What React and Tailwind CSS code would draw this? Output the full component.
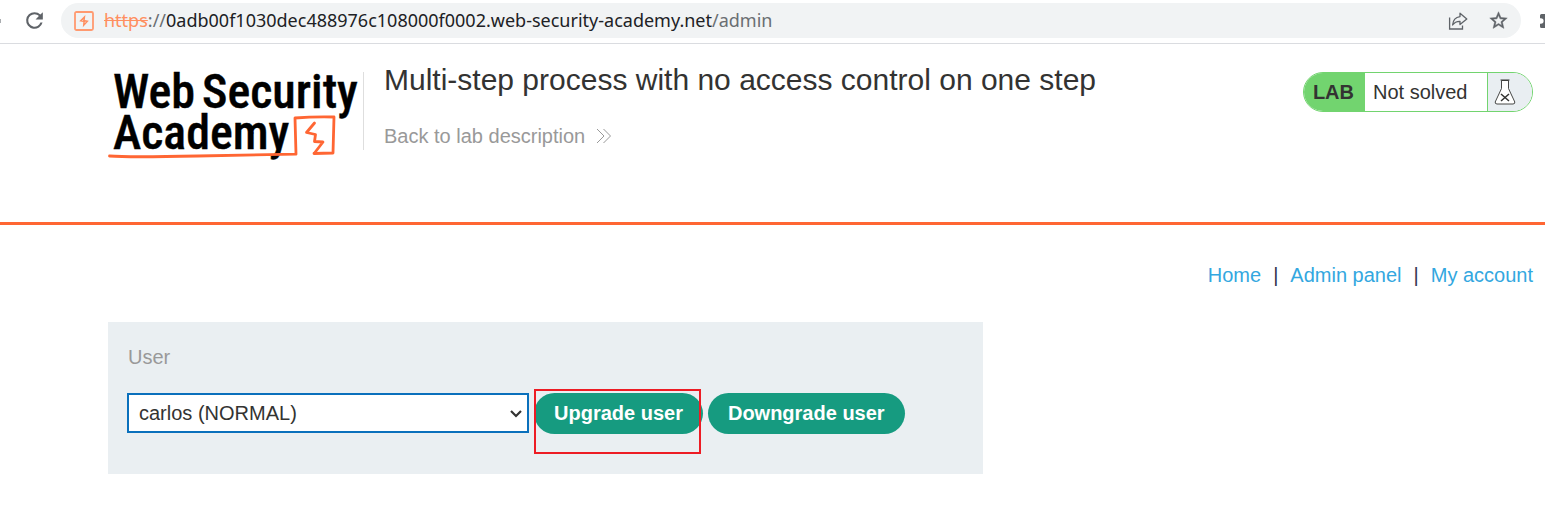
import React from "react";

function BurpIcon() {
  return (
    <svg viewBox="0 0 20 20" className="size-5 shrink-0" fill="none" aria-hidden="true">
      <rect x="1" y="1" width="18" height="18" rx="1.5" stroke="#ff9a70" strokeWidth="1.8" />
      <path d="M11.4 4 L5.2 10.2 L9.3 10.9 L8.8 16.2 L14.8 9.7 L10.8 9 Z" fill="#ff8f60" />
      <path d="M9.3 8.6 L8.2 10 M11.6 10.6 L10.8 12" stroke="#f1f3f4" strokeWidth="0.6" />
    </svg>
  );
}

function BrowserBar() {
  return (
    <div className="flex h-11 items-center overflow-hidden border-b border-[#dadce0] bg-white pb-0.5">
      <div className="flex w-[61px] shrink-0 items-center">
        <span className="h-1 w-px bg-[#aaadb0]" />
        <button type="button" aria-label="Reload" className="ml-[21px] text-[#5f6368]">
          <svg viewBox="0 0 24 24" className="size-[25px]" fill="currentColor">
            <path d="M17.65 6.35A7.96 7.96 0 0 0 12 4a8 8 0 1 0 7.73 10h-2.08A6 6 0 1 1 12 6c1.66 0 3.14.69 4.22 1.78L13 11h7V4z" />
          </svg>
        </button>
      </div>
      <div className="flex h-[35px] grow items-center rounded-full bg-[#f1f3f4] pr-3 pl-[13px]">
        <BurpIcon />
        <div
          role="textbox"
          aria-label="Address"
          className="ml-[10px] grow pb-0.5 font-['Noto_Sans',sans-serif] text-lg leading-6 whitespace-nowrap text-[#202124]"
        >
          <span className="text-[#ff8f60] line-through">https</span>
          <span className="text-[#6a6e72]">://</span>
          0adb00f1030dec488976c108000f0002.web-security-academy.net
          <span className="text-[#6a6e72]">/admin</span>
        </div>
        <div className="flex items-center gap-5 text-[#5f6368]">
          <button type="button" aria-label="Share">
            <svg viewBox="0 0 20 20" className="size-5" fill="none" stroke="currentColor" strokeWidth="1.3">
              <path d="M1.6 6.5 V18 H14.5 V14.6" />
              <path d="M12 2.2 L18.8 8 L12 13.6 V10.3 C8.6 10.2 6.4 11.4 4.6 14 C5 9.4 7.4 6.2 12 5.6 Z" strokeLinejoin="round" />
            </svg>
          </button>
          <button type="button" aria-label="Bookmark">
            <svg viewBox="0 0 24 24" className="size-[21px]" fill="currentColor" stroke="currentColor" strokeWidth="0.5">
              <path d="M22 9.24l-7.19-.62L12 2 9.19 8.63 2 9.24l5.46 4.73L5.82 21 12 17.27 18.18 21l-1.63-7.03L22 9.24zM12 15.4l-3.76 2.27 1-4.28-3.32-2.88 4.38-.38L12 6.1l1.71 4.04 4.38.38-3.32 2.88 1 4.28L12 15.4z" />
            </svg>
          </button>
        </div>
      </div>
      <div className="flex w-6 shrink-0 justify-end overflow-hidden">
        <svg viewBox="0 0 5 14" className="h-[14px] w-[5px]" fill="#5f6368" aria-hidden="true">
          <path d="M1.5 0 H5 V14 H1.5 Q0 14 0 12.5 V9.8 H0.8 A2.8 2.8 0 0 0 0.8 4.2 H0 V1.5 Q0 0 1.5 0 Z" />
        </svg>
      </div>
    </div>
  );
}

function Logo() {
  return (
    <a href="#academy" aria-label="Web Security Academy" className="block shrink-0">
      <svg viewBox="0 0 250 92" className="h-[92px] w-[250px] overflow-visible" fill="none">
        <g fill="#000" stroke="#000" strokeWidth="0.4" fontFamily="'Roboto Condensed', Roboto, sans-serif" fontWeight="500" fontSize="48">
          <text x="5" y="36">Web</text>
          <text x="94" y="36">Security</text>
          <text x="5" y="77">Academy</text>
        </g>
        <g stroke="#ff6633" strokeLinejoin="round" strokeLinecap="round">
          <path d="M1.5 84 Q20 85.5 90 84 T188 82.2 L187 46 Q206 44.5 226 45 L225 81 L206 81.5" strokeWidth="2.8" />
          <path d="M206.5 81 L215 70 L206.5 69.5 L207.5 62.5 L198.5 60.5 L206.5 51" strokeWidth="2.8" />
        </g>
      </svg>
    </a>
  );
}

function LabStatus() {
  return (
    <div className="flex h-10 shrink-0 overflow-hidden rounded-full border border-[#72d46f] bg-white text-xl leading-6 text-[#333332]">
      <span className="flex items-center bg-[#72d46f] pr-[11px] pl-[9px] font-bold">LAB</span>
      <span className="flex w-[122px] items-center pl-2">Not solved</span>
      <span className="flex w-[45px] items-center border-l border-[#72d46f] bg-[#e9eef2] pl-[6px]">
        <svg viewBox="0 0 22 26" className="h-[26px] w-[22px]" fill="none" stroke="#333332" aria-hidden="true">
          <path d="M7.5 1.5 V9.5 L1.2 23 Q1 25 3 25 H19 Q21 25 20.8 23 L14.5 9.5 V1.5 Z" fill="#fff" strokeWidth="0.9" />
          <path d="M6.5 1 H15.5" strokeWidth="1.2" />
          <path d="M7 15 L15 22 M15 15 L7 22" strokeWidth="1.5" />
        </svg>
      </span>
    </div>
  );
}

function Header() {
  return (
    <header className="flex h-[181px] items-start border-b-3 border-[#ff6633] pt-7 pr-3 pl-[108px]">
      <Logo />
      <div className="ml-[5px] h-[78px] w-px shrink-0 bg-[#dedede]" />
      <div className="grow pl-5">
        <h1 className="text-3xl leading-4 text-[#333332]">Multi-step process with no access control on one step</h1>
        <a href="#lab" className="mt-9 flex items-center text-xl leading-6 text-[#999999]">
          Back to lab description
          <svg viewBox="0 0 16 16" className="ml-[11px] size-4" fill="none" stroke="currentColor" aria-hidden="true">
            <path d="M1 1 L8 8 L1 15 M7.5 1 L14.5 8 L7.5 15" />
          </svg>
        </a>
      </div>
      <LabStatus />
    </header>
  );
}

function UserForm() {
  return (
    <form className="h-[152px] w-full max-w-[875px] bg-[#eaeff2] px-[19px] pt-[23px]" onSubmit={(e) => e.preventDefault()}>
      <label htmlFor="user" className="block pl-px leading-6 text-[#999999]">User</label>
      <div className="mt-6 flex items-start">
        <div className="relative w-[402px]">
          <select
            id="user"
            className="block h-10 w-full appearance-none border-2 border-[#0a70bc] bg-white px-[10px] text-[#333332] outline-none"
          >
            <option>carlos (NORMAL)</option>
          </select>
          <svg viewBox="0 0 12 8" className="pointer-events-none absolute top-[17px] right-[7px] h-2 w-3" fill="none" stroke="#333332" strokeWidth="2.2" aria-hidden="true">
            <path d="M1 1 L6 6 L11 1" />
          </svg>
        </div>
        <div className="relative ml-[5px]">
          <button type="submit" className="h-[41px] rounded-full bg-[#169b80] px-5 pb-0.5 font-bold text-white">Upgrade user</button>
          <div className="pointer-events-none absolute -top-1 left-0 h-[65px] w-[167px] border-2 border-[#ed1c24]" />
        </div>
        <button type="submit" className="ml-[5px] h-[41px] rounded-full bg-[#169b80] px-5 pb-0.5 font-bold text-white">Downgrade user</button>
      </div>
    </form>
  );
}

export default function App() {
  return (
    <div className="min-h-screen bg-white font-['Liberation_Sans',Arial,sans-serif]">
      <BrowserBar />
      <Header />
      <main className="pr-3 pl-[108px] text-xl">
        <nav className="flex justify-end gap-3 pt-[38px] leading-6 text-[#33a7e0]">
          <a href="#home">Home</a>
          <span className="text-[#33334f]">|</span>
          <a href="#admin">Admin panel</a>
          <span className="text-[#33334f]">|</span>
          <a href="#account">My account</a>
        </nav>
        <div className="pt-[35px]">
          <UserForm />
        </div>
      </main>
    </div>
  );
}
